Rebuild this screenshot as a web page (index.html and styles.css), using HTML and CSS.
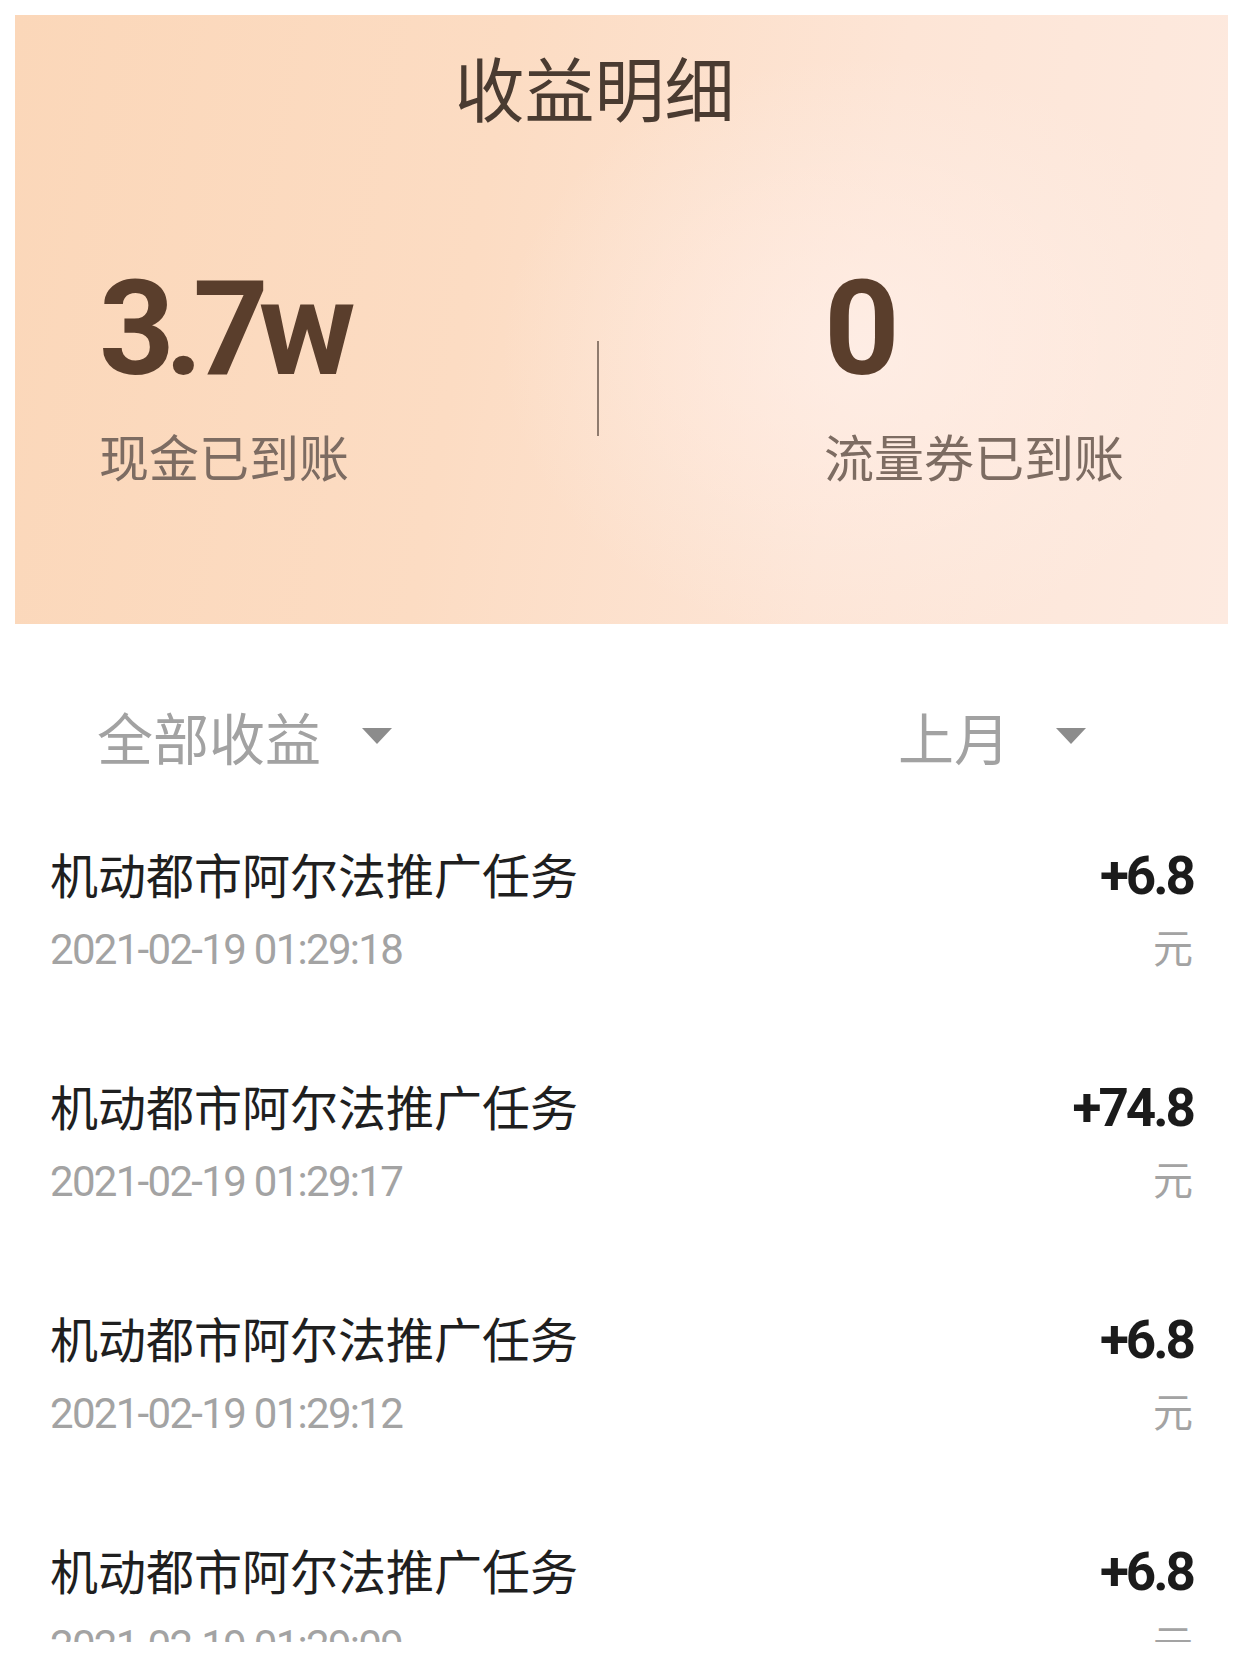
FILE: index.html
```html
<!DOCTYPE html>
<html lang="zh-CN">
<head>
<meta charset="utf-8">
<title>收益明细</title>
<link rel="stylesheet" href="styles.css">
</head>
<body>
<div class="screen">
  <header class="hero">
    <h1 class="hero-title">收益明细</h1>
    <div class="stats">
      <div class="stat stat-left">
        <div class="stat-value">3.7w</div>
        <div class="stat-label">现金已到账</div>
      </div>
      <div class="stat-divider"></div>
      <div class="stat stat-right">
        <div class="stat-value">0</div>
        <div class="stat-label">流量券已到账</div>
      </div>
    </div>
  </header>

  <div class="filters">
    <div class="filter filter-type">全部收益<span class="caret"></span></div>
    <div class="filter filter-month">上月<span class="caret caret-month"></span></div>
  </div>

  <ul class="list">
    <li class="row">
      <div class="row-main">
        <div class="row-title">机动都市阿尔法推广任务</div>
        <div class="row-date">2021-02-19 01:29:18</div>
      </div>
      <div class="row-side">
        <div class="row-amount">+6.8</div>
        <div class="row-unit">元</div>
      </div>
    </li>
    <li class="row">
      <div class="row-main">
        <div class="row-title">机动都市阿尔法推广任务</div>
        <div class="row-date">2021-02-19 01:29:17</div>
      </div>
      <div class="row-side">
        <div class="row-amount">+74.8</div>
        <div class="row-unit">元</div>
      </div>
    </li>
    <li class="row">
      <div class="row-main">
        <div class="row-title">机动都市阿尔法推广任务</div>
        <div class="row-date">2021-02-19 01:29:12</div>
      </div>
      <div class="row-side">
        <div class="row-amount">+6.8</div>
        <div class="row-unit">元</div>
      </div>
    </li>
    <li class="row">
      <div class="row-main">
        <div class="row-title">机动都市阿尔法推广任务</div>
        <div class="row-date">2021-02-19 01:29:09</div>
      </div>
      <div class="row-side">
        <div class="row-amount">+6.8</div>
        <div class="row-unit">元</div>
      </div>
    </li>
  </ul>
</div>
</body>
</html>
```

FILE: styles.css
```css
* { box-sizing: border-box; }

html, body {
  margin: 0;
  padding: 0;
  background: #ffffff;
}

body {
  font-family: Roboto, "Noto Sans CJK SC", "Noto Sans", sans-serif;
}

.screen {
  margin: 15px 14px 0 15px;
  width: 1213px;
  height: 1627px;
  overflow: hidden;
  background: #ffffff;
}

/* ---------- hero ---------- */
.hero {
  height: 609px;
  padding-top: 37px;
  background:
    radial-gradient(ellipse 520px 420px at 70% 55%, rgba(255, 240, 234, 0.7), rgba(255, 240, 234, 0) 70%),
    linear-gradient(100deg, #fbd7b9 0%, #fcdcc3 38%, #fde5d6 68%, #fdeae0 100%);
}

.hero-title {
  margin: 0;
  padding-right: 54px;
  text-align: center;
  font-family: "Noto Sans CJK SC", sans-serif;
  font-weight: 400;
  font-size: 70px;
  line-height: 70px;
  color: #4a3b31;
}

.stats {
  display: grid;
  grid-template-columns: 582px 2px 1fr;
  margin-top: 141px;
}

.stat-left { padding-left: 84px; }
.stat-right { padding-left: 225px; }

.stat-value {
  font-family: Roboto, "Liberation Sans", sans-serif;
  font-weight: 700;
  font-size: 132px;
  line-height: 132px;
  letter-spacing: -10px;
  color: #5a3e2c;
}

.stat-right .stat-value { letter-spacing: 0; }

.stat-label {
  margin-top: 35px;
  font-family: "Noto Sans CJK SC", sans-serif;
  font-size: 50px;
  line-height: 50px;
  color: #7d6c62;
}

.stat-divider {
  align-self: start;
  margin-top: 78px;
  width: 2px;
  height: 95px;
  background: #8f7b6e;
}

/* ---------- filters ---------- */
.filters {
  display: flex;
  justify-content: space-between;
  align-items: center;
  margin-top: 84px;
  padding: 0 142px 0 82px;
}

.filter {
  display: flex;
  align-items: center;
  font-family: "Noto Sans CJK SC", sans-serif;
  font-size: 56px;
  line-height: 56px;
  color: #a2a2a2;
}

.caret {
  display: block;
  width: 0;
  height: 0;
  margin-left: 41px;
  border-left: 15px solid transparent;
  border-right: 15px solid transparent;
  border-top: 16px solid #8c8c8c;
}

.caret-month { margin-left: 46px; }

/* ---------- list ---------- */
.list {
  list-style: none;
  margin: 85px 0 0 0;
  padding: 0 35px;
}

.row {
  display: flex;
  justify-content: space-between;
  align-items: flex-start;
  height: 232px;
}

.row-title {
  font-family: "Noto Sans CJK SC", sans-serif;
  font-size: 48px;
  line-height: 48px;
  color: #1f1f1f;
}

.row-date {
  margin-top: 32px;
  font-family: Roboto, "Liberation Sans", sans-serif;
  font-size: 42px;
  line-height: 42px;
  letter-spacing: -1.7px;
  color: #a3a3a3;
}

.row-side {
  display: flex;
  flex-direction: column;
  align-items: flex-end;
}

.row-amount {
  margin-top: 1px;
  font-family: Roboto, "Liberation Sans", sans-serif;
  font-weight: 700;
  font-size: 53px;
  line-height: 53px;
  letter-spacing: -3px;
  color: #1b1b1b;
}

.row-unit {
  margin-top: 23px;
  font-family: "Noto Sans CJK SC", sans-serif;
  font-size: 40px;
  line-height: 40px;
  color: #a3a3a3;
}
```
